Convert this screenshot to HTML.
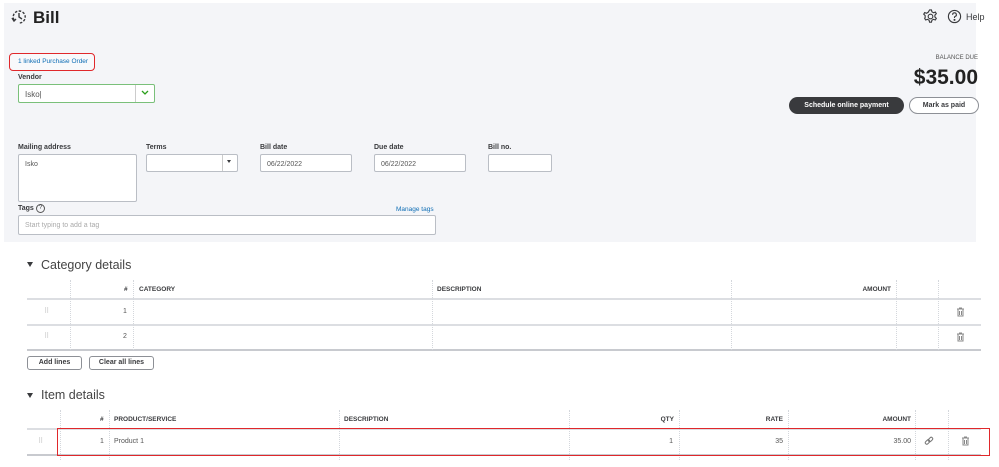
<!DOCTYPE html>
<html><head><meta charset="utf-8"><style>
*{box-sizing:border-box;margin:0;padding:0}
body{width:999px;height:467px;background:#fff;font-family:"Liberation Sans",sans-serif;color:#393a3d;position:relative;overflow:hidden}
.a{position:absolute}
.panel{left:4px;top:3px;width:972px;height:239px;background:#f4f5f8}
.lbl{font-size:7px;color:#393a3d;font-weight:bold}
.inp{background:#fff;border:1px solid #babec5;border-radius:2px;font-size:7px;color:#555;padding:6px 0 0 6px}
.th{font-size:6.5px;font-weight:bold;color:#393a3d}
.vl{border-left:1px dotted #d4d7dc;width:0}
.hl{height:0;border-top:1px solid #dcdee2}
.btn{border:1px solid #8d9096;border-radius:3px;font-size:7px;font-weight:bold;text-align:center;line-height:12px;background:#fff}
.td{font-size:7px;color:#555}
</style></head><body>
<div class="a panel"></div>
<svg class="a" style="left:11px;top:9px" width="16" height="16" viewBox="0 0 16 16" fill="none" stroke="#393a3d" stroke-width="1.4"><path d="M3 11A6 6 0 1 1 8 14" stroke-dasharray="2.5 1.5"/><path d="M8 4v4l3 2"/><path d="M1 9l2 3 2-2"/></svg>
<div class="a" style="left:33px;top:8px;font-size:17px;font-weight:bold;color:#222">Bill</div>
<svg class="a" style="left:923px;top:9px" width="15" height="15" viewBox="0 0 16 16" fill="none" stroke="#393a3d" stroke-width="1.2"><circle cx="8" cy="8" r="2.5"/><path d="M7 1h2l.5 2 1.7 1 2-.7 1 1.7-1.5 1.5v2l1.5 1.5-1 1.7-2-.7-1.7 1-.5 2H7l-.5-2-1.7-1-2 .7-1-1.7L2.3 9V7L.8 5.5l1-1.7 2 .7 1.7-1z"/></svg>
<svg class="a" style="left:947px;top:9px" width="15" height="15" viewBox="0 0 16 16" fill="none" stroke="#393a3d" stroke-width="1.2"><circle cx="8" cy="8" r="6.5"/><path d="M6 6.2a2 2 0 1 1 2.5 1.8c-.4.2-.5.5-.5 1v.6"/><circle cx="8" cy="11.6" r=".5" fill="#393a3d"/></svg>
<div class="a" style="left:966px;top:12px;font-size:9px;color:#393a3d">Help</div>
<div class="a" style="left:9px;top:53px;width:86px;height:18px;border:1.3px solid #e0282b;border-radius:4px;background:#f8f9fb"></div>
<div class="a" style="left:18px;top:58px;font-size:6.5px;color:#0f6eb5">1 linked Purchase Order</div>
<div class="a lbl" style="left:18px;top:74px">Vendor</div>
<div class="a inp" style="left:18px;top:84px;width:137px;height:19px;border:1.5px solid #7ac07a;font-size:8px;padding-top:5px">Isko|</div>
<div class="a" style="left:135px;top:85px;width:1px;height:17px;background:#ccc"></div>
<svg class="a" style="left:141px;top:90px" width="8" height="6" viewBox="0 0 8 6"><path d="M1 1l3 3 3-3" stroke="#2ca01c" stroke-width="1.3" fill="none"/></svg>
<div class="a" style="right:21px;top:55px;font-size:6px;color:#555">BALANCE DUE</div>
<div class="a" style="right:21px;top:66px;font-size:21px;font-weight:bold;color:#222">$35.00</div>
<div class="a" style="left:789px;top:97px;width:115px;height:17px;background:#393a3d;border-radius:9px;color:#fff;font-size:7px;font-weight:bold;text-align:center;line-height:17px">Schedule online payment</div>
<div class="a" style="left:909px;top:97px;width:70px;height:17px;border:1px solid #8d9096;border-radius:9px;background:#fff;font-size:7px;font-weight:bold;text-align:center;line-height:15px">Mark as paid</div>
<div class="a lbl" style="left:18px;top:144px">Mailing address</div>
<div class="a inp" style="left:18px;top:154px;width:119px;height:48px">Isko</div>
<div class="a lbl" style="left:146px;top:144px">Terms</div>
<div class="a inp" style="left:146px;top:154px;width:92px;height:18px"></div>
<div class="a" style="left:222px;top:155px;width:1px;height:16px;background:#ccc"></div>
<div class="a" style="left:227px;top:160px;border-left:2.5px solid transparent;border-right:2.5px solid transparent;border-top:3px solid #393a3d"></div>
<div class="a lbl" style="left:260px;top:144px">Bill date</div>
<div class="a inp" style="left:260px;top:154px;width:92px;height:18px">06/22/2022</div>
<div class="a lbl" style="left:374px;top:144px">Due date</div>
<div class="a inp" style="left:374px;top:154px;width:92px;height:18px">06/22/2022</div>
<div class="a lbl" style="left:488px;top:144px">Bill no.</div>
<div class="a inp" style="left:488px;top:154px;width:64px;height:18px"></div>
<div class="a lbl" style="left:18px;top:205px">Tags</div>
<div class="a" style="left:36px;top:204px;width:9px;height:9px;border:1px solid #555;border-radius:50%;font-size:6px;text-align:center;line-height:7px">?</div>
<div class="a" style="left:396px;top:206px;font-size:6.5px;color:#0f6eb5">Manage tags</div>
<div class="a inp" style="left:18px;top:215px;width:418px;height:20px;color:#aaa">Start typing to add a tag</div>

<div class="a" style="left:27px;top:262px;border-left:3px solid transparent;border-right:3px solid transparent;border-top:5px solid #393a3d"></div>
<div class="a" style="left:41px;top:258px;font-size:12.5px;color:#444">Category details</div>
<div class="a th" style="left:124px;top:286px">#</div>
<div class="a th" style="left:139px;top:286px">CATEGORY</div>
<div class="a th" style="left:437px;top:286px">DESCRIPTION</div>
<div class="a th" style="right:108px;top:286px">AMOUNT</div>
<div class="a hl" style="left:27px;top:298px;width:954px;border-top-width:2px"></div>
<div class="a hl" style="left:27px;top:324px;width:954px;border-top-width:2px"></div>
<div class="a hl" style="left:27px;top:349px;width:954px;border-top:2px solid #c8cacf"></div>
<div class="a vl" style="left:70px;top:280px;height:70px"></div>
<div class="a vl" style="left:133px;top:280px;height:70px"></div>
<div class="a vl" style="left:432px;top:280px;height:70px"></div>
<div class="a vl" style="left:731px;top:280px;height:70px"></div>
<div class="a vl" style="left:896px;top:280px;height:70px"></div>
<div class="a vl" style="left:938px;top:280px;height:70px"></div>
<div class="a td" style="left:44px;top:307px;color:#bbb">⠿</div>
<div class="a td" style="left:44px;top:332px;color:#bbb">⠿</div>
<div class="a td" style="left:123px;top:308px">1</div>
<div class="a td" style="left:123px;top:333px">2</div>
<svg class="a" style="left:956px;top:307px" width="9" height="10" viewBox="0 0 9 10" fill="none" stroke="#888" stroke-width="1"><path d="M1 2h7M3 1h3M2 2v7h5V2M3.5 4v4M5.5 4v4"/></svg>
<svg class="a" style="left:956px;top:332px" width="9" height="10" viewBox="0 0 9 10" fill="none" stroke="#888" stroke-width="1"><path d="M1 2h7M3 1h3M2 2v7h5V2M3.5 4v4M5.5 4v4"/></svg>
<div class="a btn" style="left:27px;top:356px;width:55px;height:14px">Add lines</div>
<div class="a btn" style="left:89px;top:356px;width:65px;height:14px">Clear all lines</div>

<div class="a" style="left:27px;top:393px;border-left:3px solid transparent;border-right:3px solid transparent;border-top:5px solid #393a3d"></div>
<div class="a" style="left:41px;top:388px;font-size:12.5px;color:#444">Item details</div>
<div class="a th" style="left:100px;top:416px">#</div>
<div class="a th" style="left:114px;top:416px">PRODUCT/SERVICE</div>
<div class="a th" style="left:344px;top:416px">DESCRIPTION</div>
<div class="a th" style="right:325px;top:416px">QTY</div>
<div class="a th" style="right:216px;top:416px">RATE</div>
<div class="a th" style="right:88px;top:416px">AMOUNT</div>
<div class="a hl" style="left:27px;top:428px;width:954px;border-top-width:2px"></div>
<div class="a hl" style="left:27px;top:454px;width:954px;border-top:2px solid #c8cacf"></div>
<div class="a vl" style="left:60px;top:410px;height:50px"></div>
<div class="a vl" style="left:109px;top:410px;height:50px"></div>
<div class="a vl" style="left:339px;top:410px;height:50px"></div>
<div class="a vl" style="left:569px;top:410px;height:50px"></div>
<div class="a vl" style="left:679px;top:410px;height:50px"></div>
<div class="a vl" style="left:788px;top:410px;height:50px"></div>
<div class="a vl" style="left:915px;top:410px;height:50px"></div>
<div class="a vl" style="left:948px;top:410px;height:50px"></div>
<div class="a td" style="left:38px;top:437px;color:#bbb">⠿</div>
<div class="a td" style="left:100px;top:438px">1</div>
<div class="a td" style="left:114px;top:438px">Product 1</div>
<div class="a td" style="right:326px;top:438px">1</div>
<div class="a td" style="right:216px;top:438px">35</div>
<div class="a td" style="right:88px;top:438px">35.00</div>
<svg class="a" style="left:924px;top:436px" width="10" height="10" viewBox="0 0 10 10" fill="none" stroke="#777" stroke-width="1"><rect x="1" y="4.5" width="5" height="3" rx="1.5" transform="rotate(-45 3.5 6)"/><rect x="4" y="2" width="5" height="3" rx="1.5" transform="rotate(-45 6.5 3.5)"/></svg>
<svg class="a" style="left:961px;top:436px" width="9" height="10" viewBox="0 0 9 10" fill="none" stroke="#888" stroke-width="1"><path d="M1 2h7M3 1h3M2 2v7h5V2M3.5 4v4M5.5 4v4"/></svg>
<div class="a" style="left:57px;top:428px;width:933px;height:28px;border:1.3px solid #e0282b"></div>
</body></html>
